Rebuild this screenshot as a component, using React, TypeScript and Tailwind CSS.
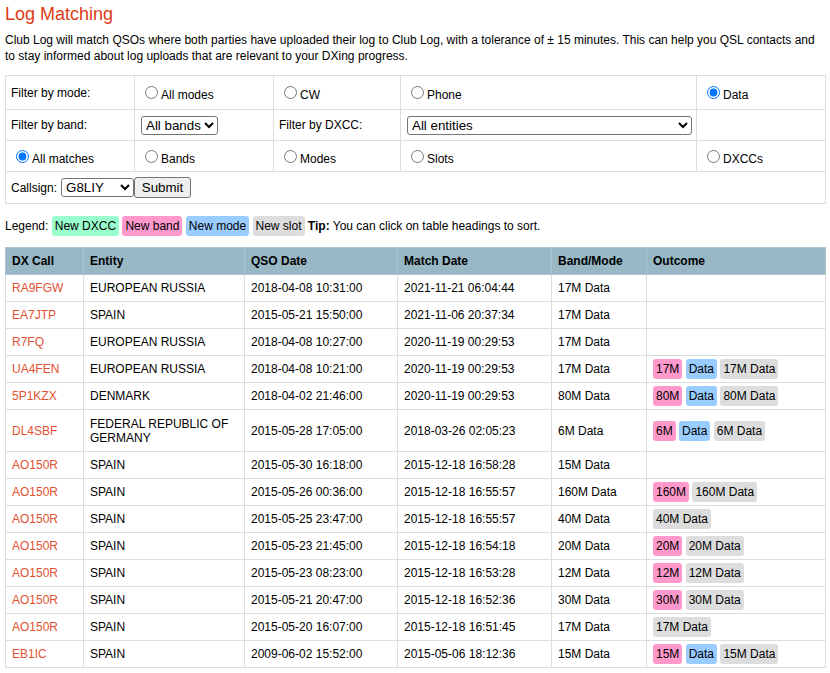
import React from 'react';

const rows = [
  { call: 'RA9FGW', entity: 'EUROPEAN RUSSIA', qso: '2018-04-08 10:31:00', match: '2021-11-21 06:04:44', bm: '17M Data', out: [] as string[][] },
  { call: 'EA7JTP', entity: 'SPAIN', qso: '2015-05-21 15:50:00', match: '2021-11-06 20:37:34', bm: '17M Data', out: [] },
  { call: 'R7FQ', entity: 'EUROPEAN RUSSIA', qso: '2018-04-08 10:27:00', match: '2020-11-19 00:29:53', bm: '17M Data', out: [] },
  { call: 'UA4FEN', entity: 'EUROPEAN RUSSIA', qso: '2018-04-08 10:21:00', match: '2020-11-19 00:29:53', bm: '17M Data', out: [['band', '17M'], ['mode', 'Data'], ['slot', '17M Data']] },
  { call: '5P1KZX', entity: 'DENMARK', qso: '2018-04-02 21:46:00', match: '2020-11-19 00:29:53', bm: '80M Data', out: [['band', '80M'], ['mode', 'Data'], ['slot', '80M Data']] },
  { call: 'DL4SBF', entity: 'FEDERAL REPUBLIC OF GERMANY', qso: '2015-05-28 17:05:00', match: '2018-03-26 02:05:23', bm: '6M Data', out: [['band', '6M'], ['mode', 'Data'], ['slot', '6M Data']] },
  { call: 'AO150R', entity: 'SPAIN', qso: '2015-05-30 16:18:00', match: '2015-12-18 16:58:28', bm: '15M Data', out: [] },
  { call: 'AO150R', entity: 'SPAIN', qso: '2015-05-26 00:36:00', match: '2015-12-18 16:55:57', bm: '160M Data', out: [['band', '160M'], ['slot', '160M Data']] },
  { call: 'AO150R', entity: 'SPAIN', qso: '2015-05-25 23:47:00', match: '2015-12-18 16:55:57', bm: '40M Data', out: [['slot', '40M Data']] },
  { call: 'AO150R', entity: 'SPAIN', qso: '2015-05-23 21:45:00', match: '2015-12-18 16:54:18', bm: '20M Data', out: [['band', '20M'], ['slot', '20M Data']] },
  { call: 'AO150R', entity: 'SPAIN', qso: '2015-05-23 08:23:00', match: '2015-12-18 16:53:28', bm: '12M Data', out: [['band', '12M'], ['slot', '12M Data']] },
  { call: 'AO150R', entity: 'SPAIN', qso: '2015-05-21 20:47:00', match: '2015-12-18 16:52:36', bm: '30M Data', out: [['band', '30M'], ['slot', '30M Data']] },
  { call: 'AO150R', entity: 'SPAIN', qso: '2015-05-20 16:07:00', match: '2015-12-18 16:51:45', bm: '17M Data', out: [['slot', '17M Data']] },
  { call: 'EB1IC', entity: 'SPAIN', qso: '2009-06-02 15:52:00', match: '2015-05-06 18:12:36', bm: '15M Data', out: [['band', '15M'], ['mode', 'Data'], ['slot', '15M Data']] },
];

const Badge: React.FC<{ kind: string; children: React.ReactNode }> = ({ kind, children }) => {
  const bg =
    kind === 'dxcc' ? 'bg-[#99ffcc]' : kind === 'band' ? 'bg-[#ff99cc]' : kind === 'mode' ? 'bg-[#99ccff]' : 'bg-[#dddddd]';
  return <span className={`${bg} rounded-[3px] px-[3px] py-[3px]`}>{children}</span>;
};

// native radio sits on the text baseline, like the browser default
const Radio: React.FC<{ label: string; name: string; checked?: boolean }> = ({ label, name, checked }) => (
  <label>
    <input type="radio" name={name} defaultChecked={checked} className="ml-[5px] mr-[3px] mt-[3px] w-[13px] h-[13px] align-baseline" />
    {label}
  </label>
);

const App: React.FC = () => {
  const cell = 'border border-[#dddddd] px-[5px] align-middle';
  const ctl = 'text-[13.33px] leading-[15px] border border-[#767676] rounded-[3px] bg-white h-[19px] pl-0';
  const td = 'border border-[#dddddd] px-[6px] py-[6px]';

  return (
    <div className="font-['Liberation_Sans',Arial,sans-serif] text-black text-[12px] leading-[14px] bg-white min-h-[673px]">
      {/* Heading */}
      <h1 className="text-[18px] text-[#dd3b16] leading-[22px] px-[5px] pt-[3px]">Log Matching</h1>
      <p className="leading-[16px] px-[5px] mt-[7px]">
        Club Log will match QSOs where both parties have uploaded their log to Club Log, with a tolerance of ± 15 minutes. This can help you QSL contacts and to stay informed about log uploads that are relevant to your DXing progress.
      </p>

      {/* Filters */}
      <table className="ml-[5px] mt-[11px] w-[820px] table-fixed border-collapse">
        <colgroup>
          <col className="w-[129px]" />
          <col className="w-[139px]" />
          <col className="w-[127px]" />
          <col className="w-[296px]" />
          <col className="w-[129px]" />
        </colgroup>
        <tbody>
          <tr className="h-[34px]">
            <td className={cell}>Filter by mode:</td>
            <td className={cell}><Radio name="mode" label="All modes" /></td>
            <td className={cell}><Radio name="mode" label="CW" /></td>
            <td className={cell}><Radio name="mode" label="Phone" /></td>
            <td className={cell}><Radio name="mode" label="Data" checked /></td>
          </tr>
          <tr className="h-[31px]">
            <td className={cell}>Filter by band:</td>
            <td className={cell}>
              <select className={`${ctl} ml-[1px] w-[77px]`} defaultValue="all">
                <option value="all">All bands</option>
              </select>
            </td>
            <td className={cell}>Filter by DXCC:</td>
            <td className={cell}>
              <select className={`${ctl} ml-[1px] w-[285px]`} defaultValue="all">
                <option value="all">All entities</option>
              </select>
            </td>
            <td className={cell}></td>
          </tr>
          <tr className="h-[31px]">
            <td className={cell}><Radio name="kind" label="All matches" checked /></td>
            <td className={cell}><Radio name="kind" label="Bands" /></td>
            <td className={cell}><Radio name="kind" label="Modes" /></td>
            <td className={cell}><Radio name="kind" label="Slots" /></td>
            <td className={cell}><Radio name="kind" label="DXCCs" /></td>
          </tr>
          <tr className="h-[32px]">
            <td className={cell} colSpan={5}>
              <div className="flex items-center">
                <span className="mr-[4px]">Callsign:</span>
                <select className={`${ctl} w-[73px]`} defaultValue="g8liy">
                  <option value="g8liy">G8LIY</option>
                </select>
                <button className="text-[13.33px] border border-[#767676] rounded-[3px] bg-[#efefef] h-[21px] w-[57px]">Submit</button>
              </div>
            </td>
          </tr>
        </tbody>
      </table>

      {/* Legend */}
      <div className="px-[5px] mt-[15px]">
        Legend: <Badge kind="dxcc">New DXCC</Badge> <Badge kind="band">New band</Badge>{' '}
        <Badge kind="mode">New mode</Badge> <Badge kind="slot">New slot</Badge> <b>Tip:</b> You can click on table headings to sort.
      </div>

      {/* Matches */}
      <table className="ml-[5px] mt-[14px] w-[820px] table-fixed border-collapse">
        <colgroup>
          <col className="w-[78px]" />
          <col className="w-[161px]" />
          <col className="w-[153px]" />
          <col className="w-[154px]" />
          <col className="w-[95px]" />
          <col className="w-[179px]" />
        </colgroup>
        <thead>
          <tr className="bg-[#97b8c4] text-left">
            {['DX Call', 'Entity', 'QSO Date', 'Match Date', 'Band/Mode', 'Outcome'].map((h) => (
              <th key={h} className="border border-[#aec3cb] px-[6px] py-[6px] font-bold cursor-pointer">
                {h}
              </th>
            ))}
          </tr>
        </thead>
        <tbody>
          {rows.map((r, i) => {
            const tall = r.entity.length > 20;
            return (
              <tr key={i}>
                <td className={`${td} text-[#e25231]`}>{r.call}</td>
                <td className={`${td} ${tall ? 'pt-[7px]' : ''}`}>{r.entity}</td>
                <td className={td}>{r.qso}</td>
                <td className={td}>{r.match}</td>
                <td className={td}>{r.bm}</td>
                <td className={td}>
                  {r.out.map(([k, t], j) => (
                    <React.Fragment key={j}>
                      {j > 0 && ' '}
                      <Badge kind={k}>{t}</Badge>
                    </React.Fragment>
                  ))}
                </td>
              </tr>
            );
          })}
        </tbody>
      </table>
    </div>
  );
};

export default App;
